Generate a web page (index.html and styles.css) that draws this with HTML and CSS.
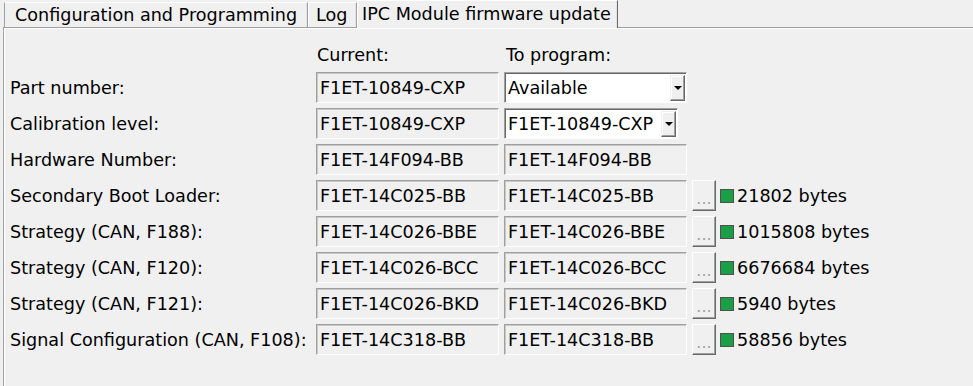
FILE: index.html
```html
<!DOCTYPE html>
<html>
<head>
<meta charset="utf-8">
<link rel="stylesheet" href="styles.css">
</head>
<body>
<div class="window">
  <div class="tabs">
    <div class="tab tab-config">Configuration and Programming</div>
    <div class="tab tab-log">Log</div>
    <div class="tab tab-active">IPC Module firmware update</div>
    <div class="tab-fill"></div>
  </div>
  <div class="panel">
    <div class="form">
      <div class="row head">
        <div class="label"></div>
        <div class="col-head">Current:</div>
        <div class="col-head">To program:</div>
      </div>
      <div class="row">
        <div class="label">Part number:</div>
        <div class="field">F1ET-10849-CXP</div>
        <div class="combo"><span class="combo-text">Available</span><span class="combo-btn"><span class="arrow"></span></span></div>
      </div>
      <div class="row">
        <div class="label">Calibration level:</div>
        <div class="field">F1ET-10849-CXP</div>
        <div class="combo combo-narrow"><span class="combo-text">F1ET-10849-CXP</span><span class="combo-btn"><span class="arrow"></span></span></div>
      </div>
      <div class="row">
        <div class="label">Hardware Number:</div>
        <div class="field">F1ET-14F094-BB</div>
        <div class="field">F1ET-14F094-BB</div>
      </div>
      <div class="row">
        <div class="label">Secondary Boot Loader:</div>
        <div class="field">F1ET-14C025-BB</div>
        <div class="field">F1ET-14C025-BB</div>
        <div class="browse">...</div>
        <div class="status"></div>
        <div class="size">21802 bytes</div>
      </div>
      <div class="row">
        <div class="label">Strategy (CAN, F188):</div>
        <div class="field">F1ET-14C026-BBE</div>
        <div class="field">F1ET-14C026-BBE</div>
        <div class="browse">...</div>
        <div class="status"></div>
        <div class="size">1015808 bytes</div>
      </div>
      <div class="row">
        <div class="label">Strategy (CAN, F120):</div>
        <div class="field">F1ET-14C026-BCC</div>
        <div class="field">F1ET-14C026-BCC</div>
        <div class="browse">...</div>
        <div class="status"></div>
        <div class="size">6676684 bytes</div>
      </div>
      <div class="row">
        <div class="label">Strategy (CAN, F121):</div>
        <div class="field">F1ET-14C026-BKD</div>
        <div class="field">F1ET-14C026-BKD</div>
        <div class="browse">...</div>
        <div class="status"></div>
        <div class="size">5940 bytes</div>
      </div>
      <div class="row">
        <div class="label">Signal Configuration (CAN, F108):</div>
        <div class="field">F1ET-14C318-BB</div>
        <div class="field">F1ET-14C318-BB</div>
        <div class="browse">...</div>
        <div class="status"></div>
        <div class="size">58856 bytes</div>
      </div>
    </div>
  </div>
</div>
</body>
</html>
```

FILE: styles.css
```css
html, body {
  margin: 0;
  padding: 0;
  background: #f0f0f0;
}
body {
  font-family: "DejaVu Sans", "Liberation Sans", sans-serif;
  font-size: 17.6px;
  color: #000;
  width: 973px;
  height: 386px;
  overflow: hidden;
}
.window {
  display: flex;
  flex-direction: column;
  height: 386px;
}
.tabs {
  display: flex;
  align-items: flex-end;
  height: 27px;
  padding-left: 4px;
  position: relative;
  z-index: 1;
}
.tab {
  box-sizing: border-box;
  height: 25px;
  line-height: 25px;
  white-space: nowrap;
  border-left: 1px solid #fff;
  border-top: 1px solid #fff;
  border-right: 1px solid #a0a0a0;
  box-shadow: inset -1px 0 0 #e3e3e3;
  background: #f0f0f0;
}
.tab-config {
  width: 304px;
  padding-left: 10px;
  border-left-color: #a0a0a0;
}
.tab-log {
  width: 49px;
  padding-left: 7px;
}
.tab-active {
  width: 261px;
  height: 28px;
  margin-bottom: -1px;
  padding-left: 4px;
  line-height: 27px;
  margin-left: 0;
  border-right-color: #696969;
}
.tab-fill {
  flex: 1;
}
.panel {
  flex: 1;
  margin-left: 3px;
  border-top: 1px solid #a0a0a0;
  border-left: 1px solid #a0a0a0;
  box-shadow: inset 1px 1px 0 #fff;
}
.form {
  display: flex;
  flex-direction: column;
  gap: 5px;
  padding-top: 8px;
  padding-left: 6px;
}
.row {
  display: flex;
  align-items: center;
  height: 31px;
}
.head {
  align-items: flex-end;
}
.col-head {
  width: 183px;
  margin-right: 5px;
  padding-left: 1px;
  line-height: 22px;
  padding-bottom: 1px;
}
.label {
  width: 306px;
  white-space: nowrap;
  padding-top: 1px;
}
.field {
  box-sizing: border-box;
  width: 183px;
  height: 31px;
  margin-right: 5px;
  padding-left: 3px;
  line-height: 30px;
  white-space: nowrap;
  overflow: hidden;
  border: 1px solid;
  border-color: #a0a0a0 #fff #fff #a0a0a0;
  box-shadow: inset 1px 1px 0 #c8c8c8;
  background: #f0f0f0;
}
.combo {
  box-sizing: border-box;
  width: 183px;
  height: 31px;
  display: flex;
  align-items: stretch;
  border: 1px solid;
  border-color: #a0a0a0 #fff #fff #a0a0a0;
  box-shadow: inset 1px 1px 0 #696969;
  background: #fff;
  padding: 2px 1px 1px 2px;
}
.combo-narrow {
  width: 174px;
}
.combo-text {
  flex: 1;
  line-height: 27px;
  padding-left: 1px;
  white-space: nowrap;
  overflow: hidden;
}
.combo-btn {
  width: 15px;
  box-sizing: border-box;
  background: #f0f0f0;
  border: 1px solid;
  border-color: #f0f0f0 #696969 #696969 #f0f0f0;
  box-shadow: inset -1px -1px 0 #a0a0a0, inset 1px 1px 0 #fff;
  display: flex;
  align-items: center;
  justify-content: center;
}
.arrow {
  width: 0;
  height: 0;
  border-left: 4px solid transparent;
  border-right: 4px solid transparent;
  border-top: 4px solid #000;
}
.browse {
  box-sizing: border-box;
  width: 24px;
  height: 31px;
  margin-left: 0;
  border: 1px solid;
  border-color: #fff #696969 #696969 #fff;
  box-shadow: inset -1px -1px 0 #a0a0a0;
  color: #a0a0a0;
  font-size: 16px;
  text-align: center;
  line-height: 36px;
  letter-spacing: 0;
}
.status {
  box-sizing: border-box;
  width: 14px;
  height: 14px;
  margin-left: 4px;
  background: #1a9f47;
  border: 1px solid #505050;
}
.size {
  margin-left: 3px;
  white-space: nowrap;
}
```
